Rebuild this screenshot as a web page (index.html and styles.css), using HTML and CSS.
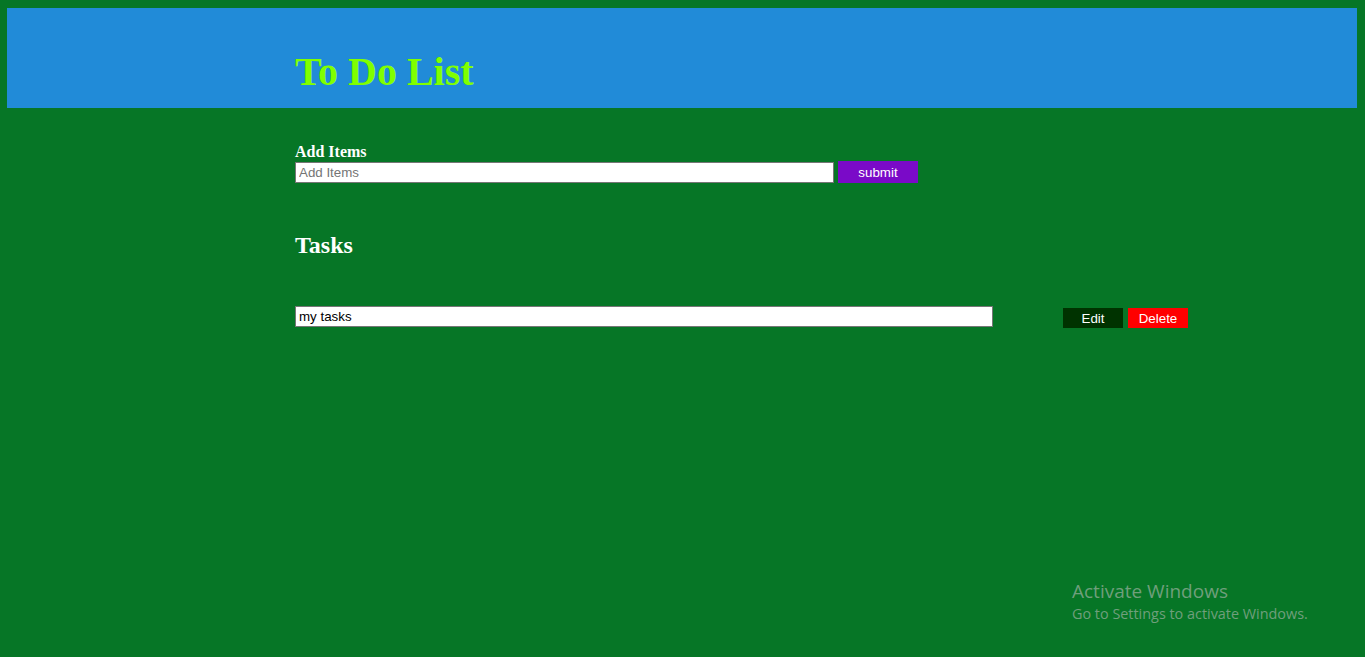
FILE: index.html
```html
<!DOCTYPE html>
<html>
<head>
<meta charset="utf-8">
<title>To Do List</title>
<link rel="stylesheet" href="styles.css">
</head>
<body>
<header class="header">
  <h1 class="title">To Do List</h1>
</header>
<main class="main">
  <section class="add">
    <label class="add-label" for="item">Add Items</label>
    <div class="add-row">
      <input id="item" class="add-input" type="text" placeholder="Add Items">
      <button class="btn btn-submit">submit</button>
    </div>
  </section>
  <h2 class="tasks-title">Tasks</h2>
  <div class="task">
    <input class="task-input" type="text" value="my tasks">
    <div class="task-actions">
      <button class="btn btn-edit">Edit</button>
      <button class="btn btn-delete">Delete</button>
    </div>
  </div>
</main>
<div class="watermark">
  <div class="wm-title">Activate Windows</div>
  <div class="wm-sub">Go to Settings to activate Windows.</div>
</div>
</body>
</html>
```
FILE: styles.css
```css
html, body {
  height: 100%;
}
body {
  margin: 8px 8px 0 7px;
  background: #067626;
  font-family: "Liberation Serif", "Times New Roman", serif;
  color: #fff;
}
.header {
  background: #218bd8;
  height: 100px;
  padding-left: 288px;
  display: flex;
  align-items: flex-end;
}
.title {
  margin: 0 0 16px 0;
  font-size: 40px;
  font-weight: bold;
  color: #80ff00;
  line-height: 1;
}
.main {
  padding-left: 288px;
  padding-top: 35px;
}
.add {
  display: flex;
  flex-direction: column;
}
.add-label {
  font-weight: bold;
  font-size: 16px;
  line-height: 18px;
}
.add-row {
  display: flex;
  align-items: center;
  gap: 4px;
}
.add-input, .task-input {
  box-sizing: border-box;
  height: 21px;
  border: 1px solid #767676;
  padding: 1px 3px;
  font-family: "Liberation Sans", Arial, sans-serif;
  font-size: 13.33px;
  background: #fff;
  color: #000;
  margin: 0;
  outline: none;
}
.add-input {
  width: 539px;
}
.add-input::placeholder {
  color: #757575;
}
.btn {
  border: none;
  margin: 0;
  padding: 0;
  height: 21px;
  font-family: "Liberation Sans", Arial, sans-serif;
  font-size: 13.33px;
  color: #fff;
  cursor: pointer;
}
.btn-submit {
  width: 80px;
  height: 22px;
  background: #7a0ac8;
}
.tasks-title {
  margin: 49px 0 0 0;
  font-size: 24px;
  font-weight: bold;
  line-height: 26px;
}
.task {
  display: flex;
  align-items: flex-start;
  margin-top: 48px;
}
.task-input {
  width: 698px;
}
.task-actions {
  display: flex;
  gap: 5px;
  margin-left: 70px;
  margin-top: 2px;
}
.btn-edit {
  width: 60px;
  height: 20px;
  background: #003300;
}
.btn-delete {
  width: 60px;
  height: 20px;
  background: #ff0000;
}
.watermark {
  position: absolute;
  left: 1072px;
  top: 579px;
  font-family: "Open Sans", "Noto Sans", sans-serif;
  color: #6f9f7c;
}
.wm-title {
  font-size: 19px;
  line-height: 24px;
}
.wm-sub {
  font-size: 14.4px;
  line-height: 21px;
}
```
